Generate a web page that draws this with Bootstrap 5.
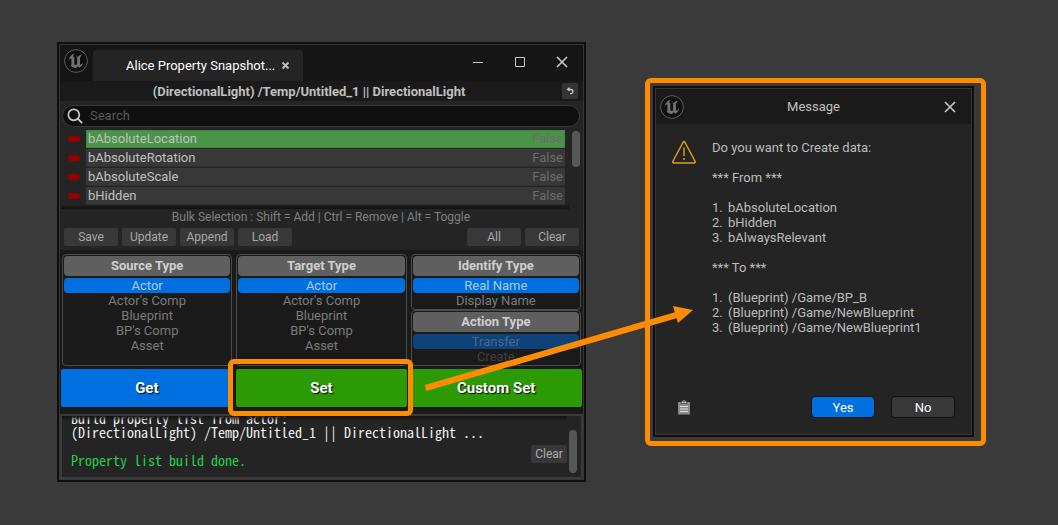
<!DOCTYPE html>
<html lang="en" data-bs-theme="dark">
<head>
<meta charset="utf-8">
<meta name="viewport" content="width=device-width, initial-scale=1">
<title>Alice Property Snapshot</title>
<link href="https://cdn.jsdelivr.net/npm/bootstrap@5.3.0/dist/css/bootstrap.min.css" rel="stylesheet">
<style>
  :root { --accent: #ff8c00; --blue: #0070e0; --green: #2b9a05; --panel: #242424; --deep: #1a1a1a; }
  body { background: #3a3a3a; color: #c0c0c0; font-family: Roboto, "Liberation Sans", sans-serif; font-size: 13px; line-height: 15px; }
  button { font-family: inherit; }
  .stage { display: grid; grid-template-columns: 529fr 341fr; column-gap: 59px; align-items: start; padding: 42px 72px 42px 57px; }
  .win { background: var(--deep); border: 2px solid #0f0f0f; box-shadow: inset 0 0 0 1px #353535; padding: 1px; }
  .win-bar { background: #151515; height: 36px; padding-right: 14px; }
  .logo { width: 24px; height: 24px; flex: none; }
  .wbtn { background: none; border: 0; padding: 0; width: 14px; height: 14px; display: flex; color: #c8c8c8; }
  .win-ctl { gap: 28px; padding-bottom: 2px; }
  .wtab { background: var(--panel); width: 210px; height: 31px; border-radius: 4px 4px 0 0; color: #fff; padding: 0 13px 0 33px; margin-left: 5px; }
  .tab-x { background: none; border: 0; padding: 0; width: 9px; height: 9px; display: flex; color: #c0c0c0; }
  .path-bar { height: 20px; font-weight: 700; padding-right: 25px; }
  .undo { right: 5px; top: 2px; width: 16px; height: 16px; background: #343434; border: 0; border-radius: 2px; padding: 0; color: #c8c8c8; }
  .body-pane { background: var(--panel); padding: 4px 3px 4px 2px; }
  .search-box { height: 22px; border: 1px solid #383838; border-radius: 11px; background: #0f0f0f; padding: 0 4px; gap: 7px; }
  .search-box input { background: none; border: 0; outline: 0; padding: 0; margin-bottom: 2px; color: #c0c0c0; font-size: 13px; line-height: 15px; }
  .search-box input::placeholder { color: #575757; opacity: 1; }
  .props { height: 80px; margin-top: 2px; margin-right: 11px; }
  .props::after { content: ""; position: absolute; inset: auto 0 0 0; height: 5px; background: linear-gradient(transparent, #101010); }
  .prop { height: 19px; padding-right: 4px; }
  .pin { width: 12px; height: 6px; border-radius: 3px; background: #950000; margin: 0 6px; }
  .prop-cell { height: 18px; background: #383838; border-bottom: 1px solid #303030; padding: 0 2px; }
  .prop.on .prop-cell { background: #499449; border: 1px solid #3f8a3f; padding: 0 1px; }
  .val { color: #6c6c6c; }
  .thumb { width: 8px; border-radius: 4px; background: #575757; }
  .list-thumb { top: 2px; right: 0; height: 36px; }
  .log-thumb { bottom: 4px; right: 4px; height: 43px; }
  .hint { font-size: 12px; color: #808080; margin-top: 1px; }
  .tools { gap: 4px; padding: 3px 1px 0 2px; }
  .tbtn { background: #383838; color: #a9a9a9; border: 0; border-radius: 2px; width: 54px; height: 18px; padding: 0; font-size: 12px; line-height: 18px; }
  .types { display: grid; grid-template-columns: repeat(3, 1fr); gap: 4px; padding: 4px 2px 0; }
  .tbox { border: 1px solid #4b4b4b; border-radius: 4px; padding: 1px; margin: 0; min-width: 0; }
  .thead { background: #5f5f5f; color: #cfcfcf; border-radius: 4px; height: 20px; line-height: 20px; font-size: 13px; font-weight: 700; text-align: center; margin: 0 0 2px; }
  .opt { display: block; clear: both; height: 15px; border-radius: 4px; text-align: center; color: #7b7b7b; cursor: pointer; }
  .btn-check:checked + .opt { background: var(--blue); color: #a9cbf1; }
  .btn-check:disabled + .opt { color: #404040; }
  .btn-check:disabled:checked + .opt { background: #0e4279; color: #45688e; }
  .btn-check[disabled] + .opt, .btn-check:disabled + .opt { opacity: 1; filter: none; }
  .acts { display: grid; grid-template-columns: repeat(3, 1fr); gap: 3px; padding: 3px 1px 7px; }
  .act { border: 0; border-radius: 2px; height: 38px; color: #fff; font-size: 15px; font-weight: 700; text-shadow: 1px 1px 1px #000; background: var(--green); }
  .act.get { background: var(--blue); }
  .focus-frame { inset: -10px -6px -9px -8px; border: 5px solid var(--accent); border-radius: 6px; z-index: 2; pointer-events: none; }
  .log { border: 2px solid #3a3a3a; background: var(--panel); height: 65px; padding: 0 9px 10px; font: 14px/14px "Noto Sans Mono CJK SC", "DejaVu Sans Mono", monospace; color: #f0f0f0; white-space: pre; }
  .log::before { content: ""; position: absolute; inset: 0 14px auto 0; height: 5px; background: linear-gradient(#111, transparent); }
  .log-ok { color: #21d04b; }
  .log-clear { right: 14px; bottom: 14px; width: 36px; font-family: Roboto, sans-serif; }
  .arrow { left: 363px; top: 262px; width: 274px; height: 86px; z-index: 3; pointer-events: none; }
  .callout { border: 5px solid var(--accent); border-radius: 6px; margin-top: 36px; padding: 3px 7px 4px 3px; }
  .dialog { background: var(--panel); min-height: 351px; }
  .dlg-bar { background: var(--deep); height: 35px; padding: 0 14px 0 4px; }
  .dlg-body { padding: 16px 16px 0; gap: 16px; color: #bcbcbc; }
  .dlg-body p, .dlg-body ol { margin: 0 0 15px; }
  .dlg-body ol { list-style: none; padding: 0; counter-reset: n; }
  .dlg-body li { display: flex; counter-increment: n; }
  .dlg-body li::before { content: counter(n) "."; width: 16px; }
  .dlg-foot { padding: 0 16px 16px 21px; gap: 16px; }
  .dbtn { width: 64px; height: 22px; padding: 0; border: 1px solid #101010; border-radius: 4px; background: #383838; color: #fff; font-size: 13px; }
  .dbtn.yes { background: var(--blue); }
  .clip { background: none; border: 0; padding: 0; width: 14px; height: 16px; display: flex; }
</style>
</head>
<body>
<svg class="d-none" aria-hidden="true">
  <symbol id="ue" viewBox="0 0 24 24">
    <circle cx="12" cy="12" r="11.4" fill="#101010" stroke="#5c5c5c"/>
    <path fill="#707070" d="M19.13 13.729c-.206.997-1.126 3.557-4.06 4.942l-1.179-1.325-1.988 2a7.338 7.338 0 01-5.804-2.978 2.859 2.859 0 00.65.123c.326.006.678-.114.678-.66v-5.394a.89.89 0 00-1.116-.89c-.92.212-1.656 2.509-1.656 2.509a7.304 7.304 0 012.528-5.597 7.408 7.408 0 013.73-1.721c-1.006.573-1.57 1.507-1.57 2.29 0 1.262.76 1.109.984.923v7.28a1.157 1.157 0 00.148.256 1.075 1.075 0 00.88.445c.76 0 1.747-.868 1.747-.868V9.172c0-.6-.452-1.324-.905-1.572 0 0 .838-.149 1.484.346a5.537 5.537 0 01.387-.425c1.508-1.48 2.929-1.902 4.112-2.112 0 0-2.151 1.69-2.151 3.96 0 1.687.043 5.801.043 5.801.799.771 1.986-.342 3.059-1.441Z"/>
  </symbol>
  <symbol id="cross" viewBox="0 0 14 14"><path d="M2 2l10 10M12 2L2 12" stroke="currentColor" stroke-width="1.6" fill="none"/></symbol>
</svg>

<main class="stage">
  <section class="win position-relative" aria-label="Alice Property Snapshot">
    <header class="win-bar d-flex align-items-end">
      <svg class="logo align-self-start ms-1 mt-1" aria-hidden="true"><use href="#ue"/></svg>
      <div class="wtab d-flex align-items-center justify-content-between">
        <span>Alice Property Snapshot...</span>
        <button class="tab-x" aria-label="Close tab"><svg width="9" height="9" viewBox="0 0 9 9"><path d="M1.500 1.500l6 6M7.500 1.500l-6 6" stroke="currentColor" stroke-width="1.900"/></svg></button>
      </div>
      <div class="win-ctl d-flex align-self-center ms-auto">
        <button class="wbtn" aria-label="Minimize"><svg width="14" height="14"><path d="M2 7.500h10" stroke="currentColor"/></svg></button>
        <button class="wbtn" aria-label="Maximize"><svg width="14" height="14"><path d="M2.500 2.500h9v9h-9z" fill="none" stroke="currentColor"/></svg></button>
        <button class="wbtn" aria-label="Close"><svg width="14" height="14"><use href="#cross"/></svg></button>
      </div>
    </header>
    <div class="path-bar position-relative d-flex align-items-center justify-content-center">
      <span>(DirectionalLight) /Temp/Untitled_1 || DirectionalLight</span>
      <button class="undo position-absolute d-flex align-items-center justify-content-center" aria-label="Revert"><svg width="8" height="8" viewBox="0 0 8 8"><path d="M3.500 0v4.600L0.500 2.300z" fill="currentColor"/><path d="M3 2.500h1.800a1.900 1.900 0 010 4.200H4" fill="none" stroke="currentColor" stroke-width="1.300"/></svg></button>
    </div>
    <div class="body-pane">
      <label class="search-box d-flex align-items-center">
        <svg width="16" height="16" viewBox="0 0 16 16" aria-hidden="true"><circle cx="6.800" cy="6.800" r="5.500" fill="none" stroke="#c8c8c8" stroke-width="1.700"/><path d="M10.700 10.700l4.500 4.500" stroke="#c8c8c8" stroke-width="1.900"/></svg>
        <input class="flex-fill" type="search" placeholder="Search" aria-label="Search">
      </label>
      <div class="position-relative">
        <ul class="props list-unstyled mb-0 overflow-hidden position-relative">
          <li class="prop on d-flex align-items-center"><span class="pin"></span><div class="prop-cell flex-fill d-flex align-items-center justify-content-between"><span>bAbsoluteLocation</span><span class="val">False</span></div></li>
          <li class="prop d-flex align-items-center"><span class="pin"></span><div class="prop-cell flex-fill d-flex align-items-center justify-content-between"><span>bAbsoluteRotation</span><span class="val">False</span></div></li>
          <li class="prop d-flex align-items-center"><span class="pin"></span><div class="prop-cell flex-fill d-flex align-items-center justify-content-between"><span>bAbsoluteScale</span><span class="val">False</span></div></li>
          <li class="prop d-flex align-items-center"><span class="pin"></span><div class="prop-cell flex-fill d-flex align-items-center justify-content-between"><span>bHidden</span><span class="val">False</span></div></li>
        </ul>
        <div class="thumb list-thumb position-absolute"></div>
      </div>
      <div class="hint text-center">Bulk Selection : Shift = Add | Ctrl = Remove | Alt = Toggle</div>
      <div class="tools d-flex">
        <button class="tbtn">Save</button><button class="tbtn">Update</button><button class="tbtn">Append</button><button class="tbtn">Load</button>
        <button class="tbtn ms-auto">All</button><button class="tbtn">Clear</button>
      </div>
    </div>
    <form class="types">
      <fieldset class="tbox">
        <legend class="thead">Source Type</legend>
        <input class="btn-check" type="radio" name="src" id="s1" checked><label class="opt" for="s1">Actor</label>
        <input class="btn-check" type="radio" name="src" id="s2"><label class="opt" for="s2">Actor's Comp</label>
        <input class="btn-check" type="radio" name="src" id="s3"><label class="opt" for="s3">Blueprint</label>
        <input class="btn-check" type="radio" name="src" id="s4"><label class="opt" for="s4">BP's Comp</label>
        <input class="btn-check" type="radio" name="src" id="s5"><label class="opt" for="s5">Asset</label>
      </fieldset>
      <fieldset class="tbox">
        <legend class="thead">Target Type</legend>
        <input class="btn-check" type="radio" name="dst" id="t1" checked><label class="opt" for="t1">Actor</label>
        <input class="btn-check" type="radio" name="dst" id="t2"><label class="opt" for="t2">Actor's Comp</label>
        <input class="btn-check" type="radio" name="dst" id="t3"><label class="opt" for="t3">Blueprint</label>
        <input class="btn-check" type="radio" name="dst" id="t4"><label class="opt" for="t4">BP's Comp</label>
        <input class="btn-check" type="radio" name="dst" id="t5"><label class="opt" for="t5">Asset</label>
      </fieldset>
      <div class="d-flex flex-column">
        <fieldset class="tbox">
          <legend class="thead">Identify Type</legend>
          <input class="btn-check" type="radio" name="idn" id="i1" checked><label class="opt" for="i1">Real Name</label>
          <input class="btn-check" type="radio" name="idn" id="i2"><label class="opt" for="i2">Display Name</label>
        </fieldset>
        <fieldset class="tbox" disabled>
          <legend class="thead">Action Type</legend>
          <input class="btn-check" type="radio" name="act" id="a1" checked><label class="opt" for="a1">Transfer</label>
          <input class="btn-check" type="radio" name="act" id="a2"><label class="opt" for="a2">Create</label>
        </fieldset>
      </div>
    </form>
    <div class="acts">
      <button class="act get">Get</button>
      <div class="position-relative d-flex">
        <button class="act flex-fill">Set</button>
        <div class="focus-frame position-absolute"></div>
      </div>
      <button class="act">Custom Set</button>
    </div>
    <div class="log position-relative overflow-hidden d-flex flex-column justify-content-end">
      <div>Build property list from actor:</div>
      <div>(DirectionalLight) /Temp/Untitled_1 || DirectionalLight ...</div>
      <div>&nbsp;</div>
      <div class="log-ok">Property list build done.</div>
      <button class="tbtn log-clear position-absolute">Clear</button>
      <div class="thumb log-thumb position-absolute"></div>
    </div>
    <svg class="arrow position-absolute" viewBox="0 0 274 86" aria-hidden="true">
      <path d="M3.500 82L258 8" stroke="#ff8c00" stroke-width="6"/><path d="M251 0l20 4-15 13z" fill="#ff8c00"/>
    </svg>
  </section>

  <div class="callout">
    <section class="win dialog d-flex flex-column" role="dialog" aria-label="Message">
      <header class="dlg-bar d-flex align-items-center justify-content-between">
        <svg class="logo" aria-hidden="true"><use href="#ue"/></svg>
        <span>Message</span>
        <button class="wbtn" aria-label="Close"><svg width="14" height="14"><use href="#cross"/></svg></button>
      </header>
      <div class="dlg-body d-flex">
        <svg class="flex-shrink-0" width="24" height="24" viewBox="0 0 24 24" fill="none" stroke="#e0a010" stroke-width="1.400" aria-hidden="true"><path d="M11.200 2.200Q12 .8 12.800 2.200L23.200 21.500Q23.600 23 22.200 23H1.800Q.4 23 .8 21.500z"/><path d="M12 7.500v8.500M12 18v2"/></svg>
        <div>
          <p>Do you want to Create data:</p>
          <p>*** From ***</p>
          <ol><li>bAbsoluteLocation</li><li>bHidden</li><li>bAlwaysRelevant</li></ol>
          <p>*** To ***</p>
          <ol><li>(Blueprint) /Game/BP_B</li><li>(Blueprint) /Game/NewBlueprint</li><li>(Blueprint) /Game/NewBlueprint1</li></ol>
        </div>
      </div>
      <footer class="dlg-foot d-flex align-items-center mt-auto">
        <button class="clip me-auto" aria-label="Copy message"><svg width="14" height="16" viewBox="0 0 14 16"><path fill="#8a8a8a" d="M1 3h12v12.500H1z"/><path d="M4 4.500V3.300L7 .8l3 2.500v1.200z" fill="#c8c8c8" stroke="#242424" stroke-width=".6"/><path d="M7 2.300v1" stroke="#242424" stroke-width="1.400"/><path d="M3 7.500h8M3 10h8M3 12.500h8" stroke="#e0e0e0"/></svg></button>
        <button class="dbtn yes">Yes</button>
        <button class="dbtn">No</button>
      </footer>
    </section>
  </div>
</main>
<script src="https://cdn.jsdelivr.net/npm/bootstrap@5.3.0/dist/js/bootstrap.bundle.min.js"></script>
</body>
</html>
